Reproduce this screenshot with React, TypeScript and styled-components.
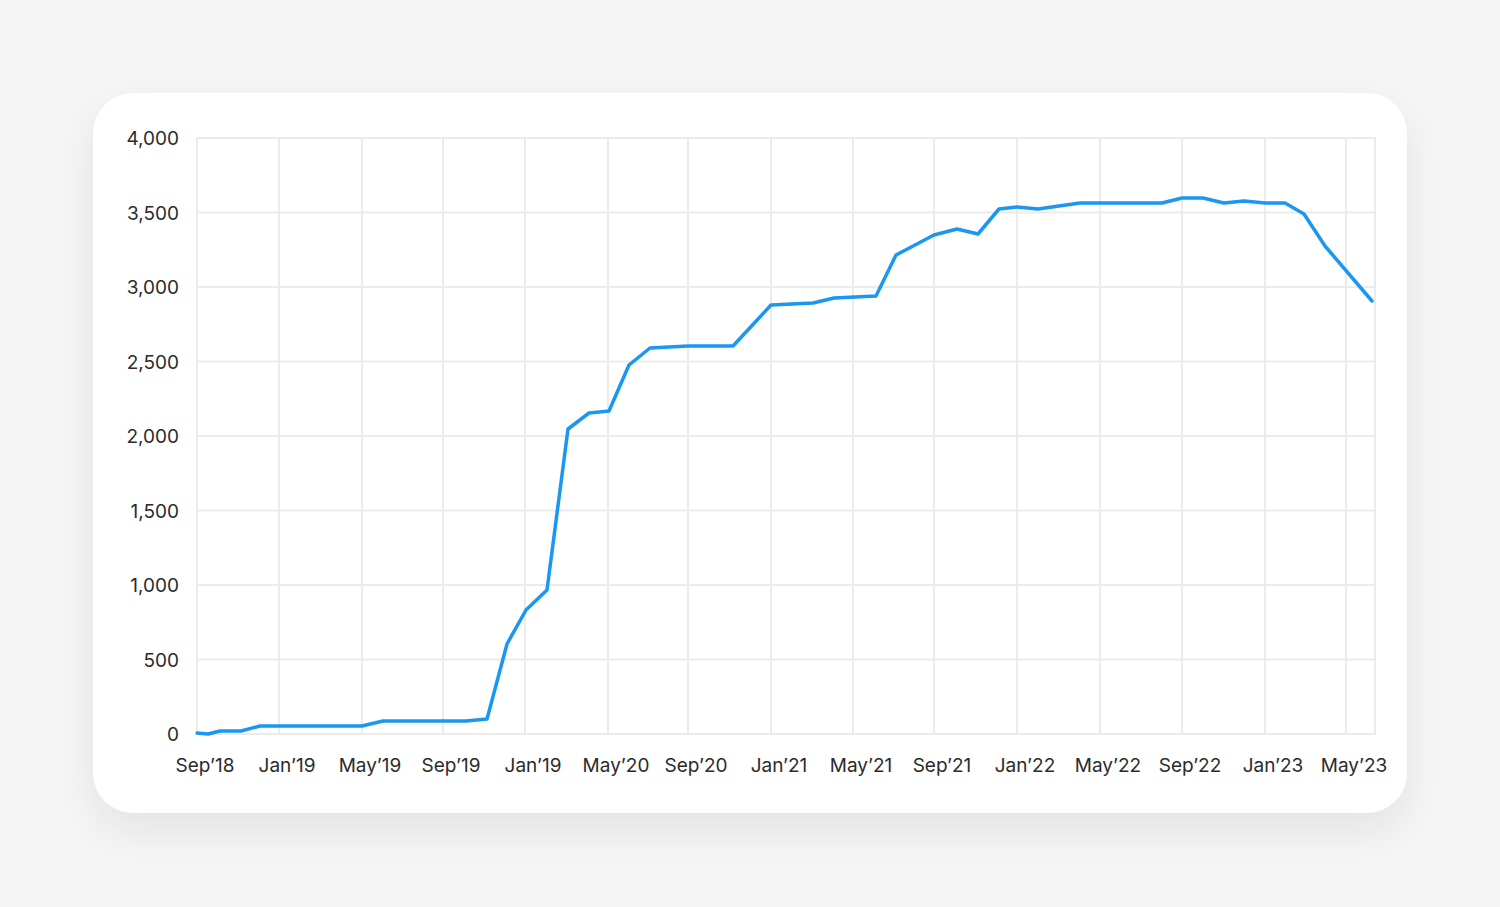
import React from "react";
import styled, { createGlobalStyle } from "styled-components";

const Global = createGlobalStyle`
  html, body { margin: 0; padding: 0; background: #f5f5f6; }
  body { font-family: Inter, "Noto Sans", sans-serif; }
`;

const Page = styled.div`
  padding: 93px 0 0 93px;
  height: 907px;
  box-sizing: border-box;
`;

const Card = styled.div`
  width: 1314px;
  height: 720px;
  background: #fff;
  border-radius: 40px;
  box-shadow: 0 18px 40px rgba(20, 20, 40, 0.08);
  overflow: hidden;
`;

const pts: [number, number][] = [
  [197,733],[208,734],[220,731],[241,731],[260,726],[279,726],[362,726],[383,721],[466,721],[487,719],
  [507,644],[526,610],[547,590],[568,429],[589,413],[609,411],[629,365],[650,348],[688,346],[733,346],
  [771,305],[813,303],[834,298],[876,296],[896,255],[934,235],[957,229],[978,234],[999,209],[1017,207],
  [1038,209],[1080,203],[1100,203],[1162,203],[1182,198],[1203,198],[1224,203],[1244,201],[1265,203],
  [1285,203],[1304,214],[1325,246],[1372,301],
];

const yLabels = ["4,000","3,500","3,000","2,500","2,000","1,500","1,000","500","0"];
const xs = [197,279,362,443,525,608,688,771,853,934,1017,1100,1182,1265,1346];
const xLabels = ["Sep’18","Jan’19","May’19","Sep’19","Jan’19","May’20","Sep’20","Jan’21","May’21","Sep’21","Jan’22","May’22","Sep’22","Jan’23","May’23"];
const O = 93;

export default function App() {
  const top = 138, bottom = 734, step = (bottom - top) / 8;
  return (
    <>
      <Global />
      <Page>
        <Card>
          <svg width={1314} height={720} viewBox={`${O} ${O} 1314 720`}>
            {yLabels.map((l, i) => (
              <g key={l}>
                <line x1={197} x2={1376} y1={top + i * step} y2={top + i * step} stroke="#ebebeb" strokeWidth={2} />
                <text x={179} y={top + i * step + 7} textAnchor="end" fontSize={19} fill="#2b2b2b" fontFamily="Inter, sans-serif">{l}</text>
              </g>
            ))}
            {xs.map((x, i) => (
              <g key={i}>
                <line x1={x} x2={x} y1={top} y2={bottom} stroke="#ebebeb" strokeWidth={2} />
                <text x={x + 8} y={772} textAnchor="middle" fontSize={19} fill="#2b2b2b" fontFamily="Inter, sans-serif">{xLabels[i]}</text>
              </g>
            ))}
            <line x1={1375} x2={1375} y1={top} y2={bottom} stroke="#ebebeb" strokeWidth={2} />
            <polyline points={pts.map(p => p.join(",")).join(" ")} fill="none" stroke="#1a97f0" strokeWidth={3.5} strokeLinejoin="round" strokeLinecap="round" />
          </svg>
        </Card>
      </Page>
    </>
  );
}
